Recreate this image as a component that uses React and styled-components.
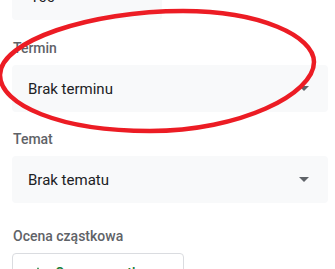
import React from "react";
import styled, { createGlobalStyle } from "styled-components";

const Global = createGlobalStyle`
  html, body { margin: 0; padding: 0; background: #ffffff; }
  body { font-family: Roboto, "Noto Sans", Arial, sans-serif; overflow: hidden; }
`;

const Page = styled.div`
  position: relative;
  width: 335px;
  height: 269px;
  overflow: hidden;
`;

const Form = styled.div`
  display: flex;
  flex-direction: column;
  padding: 0 7px 0 12px;
  margin-top: -27px;
`;

const Field = styled.div`
  display: flex;
  flex-direction: column;
  gap: 7px;
  margin-bottom: ${(p) => p.$mb}px;
`;

const Label = styled.div`
  font-size: 14px;
  font-weight: 500;
  line-height: 20px;
  color: #5f6368;
  padding-left: 1px;
`;

const TextBox = styled.div`
  width: 150px;
  height: 47px;
  box-sizing: border-box;
  background: #f8f9fa;
  border-radius: 4px;
  padding: 0 18px;
  display: flex;
  align-items: center;
  font-size: 15px;
  color: #202124;
`;

const Select = styled.div`
  height: 47px;
  box-sizing: border-box;
  background: #f8f9fa;
  border-radius: 4px;
  padding: 0 19px 0 16px;
  display: flex;
  align-items: center;
  justify-content: space-between;
  font-size: 15px;
  color: #202124;
`;

const Caret = styled.span`
  width: 0;
  height: 0;
  border-left: 5px solid transparent;
  border-right: 5px solid transparent;
  border-top: 5px solid #5f6368;
`;

const OutlineButton = styled.div`
  width: 172px;
  height: 40px;
  box-sizing: border-box;
  border: 1px solid #dadce0;
  border-radius: 4px;
  display: flex;
  align-items: center;
  gap: 8px;
  padding: 0 16px;
  font-size: 14px;
  font-weight: 500;
  color: #188038;
`;

const Mark = styled.svg`
  position: absolute;
  left: 0;
  top: 0;
  overflow: visible;
  pointer-events: none;
`;

export default function App() {
  return (
    <Page>
      <Global />
      <Form>
        <Field $mb={18}>
          <TextBox>100</TextBox>
        </Field>
        <Field $mb={17}>
          <Label>Termin</Label>
          <Select>
            <span>Brak terminu</span>
            <Caret />
          </Select>
        </Field>
        <Field $mb={23}>
          <Label>Temat</Label>
          <Select>
            <span>Brak tematu</span>
            <Caret />
          </Select>
        </Field>
        <Field $mb={0}>
          <Label>Ocena cząstkowa</Label>
          <OutlineButton>
            <svg width="18" height="18" viewBox="0 0 24 24">
              <path d="M19 13h-6v6h-2v-6H5v-2h6V5h2v6h6v2z" fill="#188038" />
            </svg>
            <span>Ocena cząstkowa</span>
          </OutlineButton>
        </Field>
      </Form>
      <Mark width="335" height="269" viewBox="0 0 335 269">
        <path
          d="M183 11 C260 11 314 36 314 62 C314 94 240 131 150 131 C60 131 0 105 0 75 C0 41 90 11 183 11 Z"
          fill="none"
          stroke="#ec1c24"
          strokeWidth="4.5"
        />
      </Mark>
    </Page>
  );
}
